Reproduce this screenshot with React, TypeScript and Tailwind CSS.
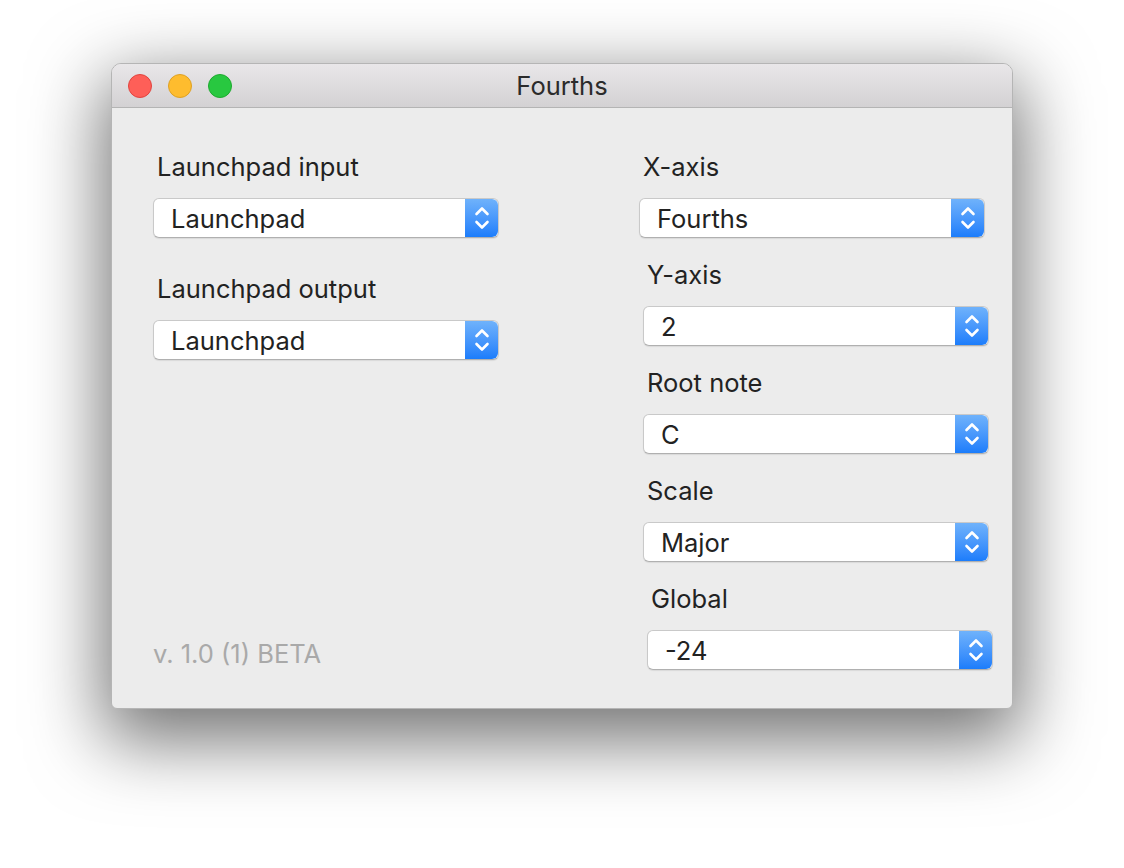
import { ReactNode } from 'react'

const font = { fontFamily: 'Inter, "Liberation Sans", Arial, sans-serif' }

function Stepper() {
  return (
    <div className="flex h-full w-[33px] shrink-0 items-center justify-center rounded-r-[6px] bg-gradient-to-b from-[#6fb2fb] to-[#1b7dfb]">
      <svg width="16" height="28" viewBox="0 0 16 28" fill="none" stroke="white" strokeWidth="2.6" strokeLinecap="round" strokeLinejoin="round">
        <path d="M2.5 10 L8 4.5 L13.5 10" />
        <path d="M2.5 18 L8 23.5 L13.5 18" />
      </svg>
    </div>
  )
}

function Popup({ value }: { value: string }) {
  return (
    <div className="flex h-[40px] w-[346px] items-stretch rounded-[6px] border border-[#c9c9c9] border-b-[#b0b0b0] bg-white shadow-[0_1px_1px_rgba(0,0,0,0.08)]">
      <div className="flex flex-1 items-center pl-[17px] pt-[2px] text-[25.5px] text-[#222]">{value}</div>
      <Stepper />
    </div>
  )
}

function Field({ label, value, offset, gap }: { label: string; value: string; offset: string; gap: string }) {
  return (
    <div className={`${offset} ${gap}`}>
      <div className="ml-[4px] h-[32px] text-[25.5px] leading-[32px] text-[#222]">{label}</div>
      <div className="mt-[15px]">
        <Popup value={value} />
      </div>
    </div>
  )
}

function Light({ color, ring }: { color: string; ring: string }) {
  return <div className={`h-[24px] w-[24px] rounded-full border ${color} ${ring}`} />
}

function Window({ children }: { children: ReactNode }) {
  return (
    <div className="ml-[111px] h-[646px] w-[902px] overflow-hidden rounded-t-[10px] rounded-b-[6px] border border-[#b5b5b5] bg-[#ececec] shadow-[0_24px_72px_8px_rgba(0,0,0,0.55)]">
      <div className="relative flex h-[44px] items-center border-b border-[#b4b4b4] bg-gradient-to-b from-[#e9e7e9] to-[#d3d1d3] pl-[16px]">
        <div className="flex gap-[16px]">
          <Light color="bg-[#fe5f58]" ring="border-[#e1443f]" />
          <Light color="bg-[#febc2e]" ring="border-[#dea123]" />
          <Light color="bg-[#28c840]" ring="border-[#1eaa2f]" />
        </div>
        <div className="absolute inset-x-0 top-0 flex h-[44px] items-center justify-center pt-[1px] text-[25.5px] text-[#2b2b2b]">Fourths</div>
      </div>
      {children}
    </div>
  )
}

export default function App() {
  return (
    <div className="h-[868px] w-[1124px] overflow-hidden bg-white pt-[63px]" style={font}>
      <Window>
        <div className="flex h-[600px]">
          <div className="flex w-[527px] shrink-0 flex-col pl-[41px] pt-[43px]">
            <Field label="Launchpad input" value="Launchpad" offset="ml-0" gap="mb-[35px]" />
            <Field label="Launchpad output" value="Launchpad" offset="ml-0" gap="mb-0" />
            <div className="mt-auto mb-[38px] h-[32px] text-[25.5px] leading-[32px] text-[#a9a9a9]">v. 1.0 (1) BETA</div>
          </div>
          <div className="flex flex-col pt-[43px]">
            <Field label="X-axis" value="Fourths" offset="ml-0" gap="mb-[21px]" />
            <Field label="Y-axis" value="2" offset="ml-[4px]" gap="mb-[21px]" />
            <Field label="Root note" value="C" offset="ml-[4px]" gap="mb-[21px]" />
            <Field label="Scale" value="Major" offset="ml-[4px]" gap="mb-[21px]" />
            <Field label="Global" value="-24" offset="ml-[8px]" gap="mb-0" />
          </div>
        </div>
      </Window>
    </div>
  )
}
